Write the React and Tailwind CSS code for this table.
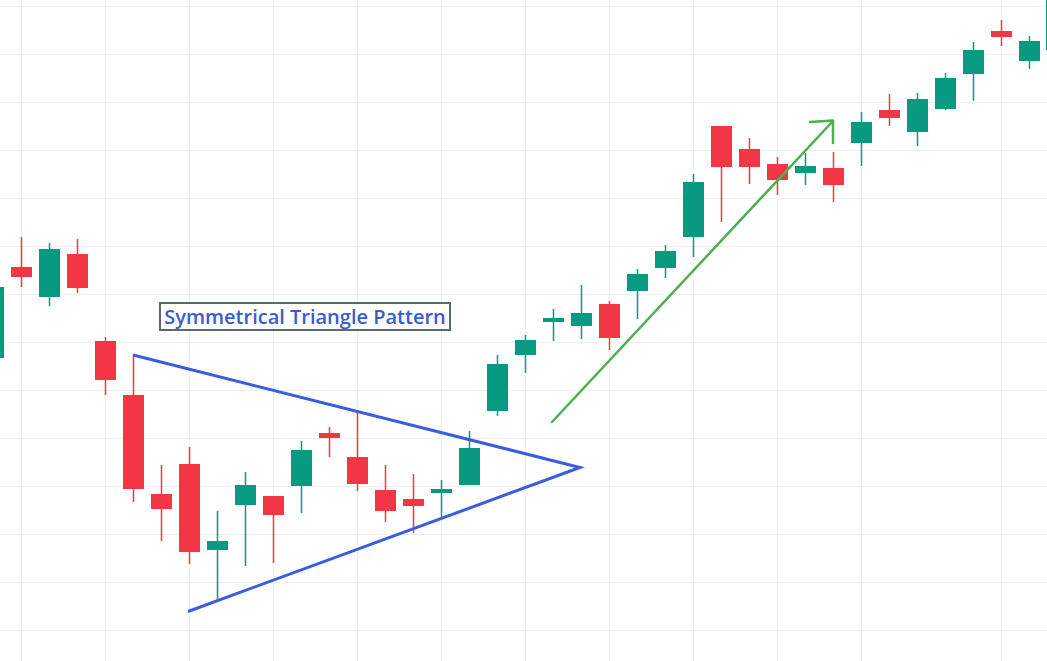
import React from 'react';

// [centerX, bodyTop, bodyBottom, wickTop, wickBottom, up?]
const candles = [
    [-6.5, 287, 358, 280, 366, true],
    [21.5, 267, 277, 237, 287, false],
    [49.5, 249, 297, 243, 306, true],
    [77.5, 254, 288, 239, 293, false],
    [105.5, 341, 380, 337, 395, false],
    [133.5, 395, 489, 355, 502, false],
    [161.5, 494, 509, 465, 541, false],
    [189.5, 464, 552, 447, 564, false],
    [217.5, 541, 550, 511, 600, true],
    [245.5, 485, 505, 472, 566, true],
    [273.5, 496, 515, 496, 563, false],
    [301.5, 450, 486, 441, 513, true],
    [329.5, 433, 438, 427, 457, false],
    [357.5, 457, 484, 412, 491, false],
    [385.5, 490, 511, 465, 522, false],
    [413.5, 499, 506, 474, 533, false],
    [441.5, 489, 493, 480, 517, true],
    [469.5, 448, 485, 431, 485, true],
    [497.5, 364, 411, 355, 416, true],
    [525.5, 340, 355, 335, 373, true],
    [553.5, 318, 322, 309, 341, true],
    [581.5, 313, 326, 285, 339, true],
    [609.5, 304, 338, 301, 350, false],
    [637.5, 274, 291, 269, 319, true],
    [665.5, 251, 268, 245, 278, true],
    [693.5, 182, 237, 174, 257, true],
    [721.5, 126, 167, 126, 222, false],
    [749.5, 149, 167, 138, 184, false],
    [777.5, 164, 180, 157, 195, false],
    [805.5, 166, 173, 153, 185, true],
    [833.5, 168, 185, 152, 202, false],
    [861.5, 122, 143, 112, 166, true],
    [889.5, 110, 118, 94, 126, false],
    [917.5, 99, 132, 93, 146, true],
    [945.5, 78, 109, 73, 110, true],
    [973.5, 50, 74, 42, 101, true],
    [1001.5, 31, 37, 20, 46, false],
    [1029.5, 41, 61, 36, 69, true],
    [1056.5, -10, 50, -10, 55, true],
];

const vLines = [21.5, 105.5, 189.5, 273.5, 357.5, 441.5, 525.5, 609.5, 693.5, 777.5, 861.5, 1001.5];
const hLines = [6.5, 54.5, 102.5, 150.5, 198.5, 246.5, 294.5, 342.5, 390.5, 438.5, 486.5, 534.5, 582.5, 630.5];

const UP = '#089981';
const DOWN = '#f23645';

export default function App() {
    return (
        <div className="relative w-[1047px] h-[661px] overflow-hidden bg-white" style={{ fontFamily: "'Open Sans', 'Noto Sans', sans-serif" }}>
            <svg width="1047" height="661" viewBox="0 0 1047 661" className="block">
                {/* grid */}
                {vLines.map(x => (
                    <line key={'v' + x} x1={x} y1="0" x2={x} y2="661" stroke="#eef0f3" strokeWidth="1" />
                ))}
                {hLines.map(y => (
                    <line key={'h' + y} x1="0" y1={y} x2="1047" y2={y} stroke="#eef0f3" strokeWidth="1" />
                ))}

                {/* candles */}
                {candles.map(([cx, bt, bb, wt, wb, up], i) => {
                    const c = up ? UP : DOWN;
                    return (
                        <g key={i}>
                            <rect x={cx - 0.75} y={wt} width="1.5" height={wb - wt} fill={c} />
                            <rect x={cx - 10.5} y={bt} width="21" height={Math.max(bb - bt, 3)} fill={c} />
                        </g>
                    );
                })}

                {/* triangle */}
                <polyline points="133,355 580,467.5 188,611.5" fill="none" stroke="#3a5ce0" strokeWidth="3" strokeLinejoin="miter" strokeLinecap="butt" />

                {/* breakout arrow */}
                <line x1="552" y1="422" x2="833" y2="121" stroke="#4caf50" strokeWidth="2.5" strokeLinecap="round" />
                <polyline points="810,122 833,120.5 833,143" fill="none" stroke="#4caf50" strokeWidth="2.5" strokeLinecap="round" strokeLinejoin="round" />
            </svg>

            {/* pattern label */}
            <div className="absolute left-[159px] top-[302px] w-[292px] h-[29px] border-2 border-[#5a6870] bg-white flex items-center justify-center">
                <span className="text-[20px] font-semibold leading-none text-[#3a5ccf] whitespace-nowrap">Symmetrical Triangle Pattern</span>
            </div>
        </div>
    );
}
